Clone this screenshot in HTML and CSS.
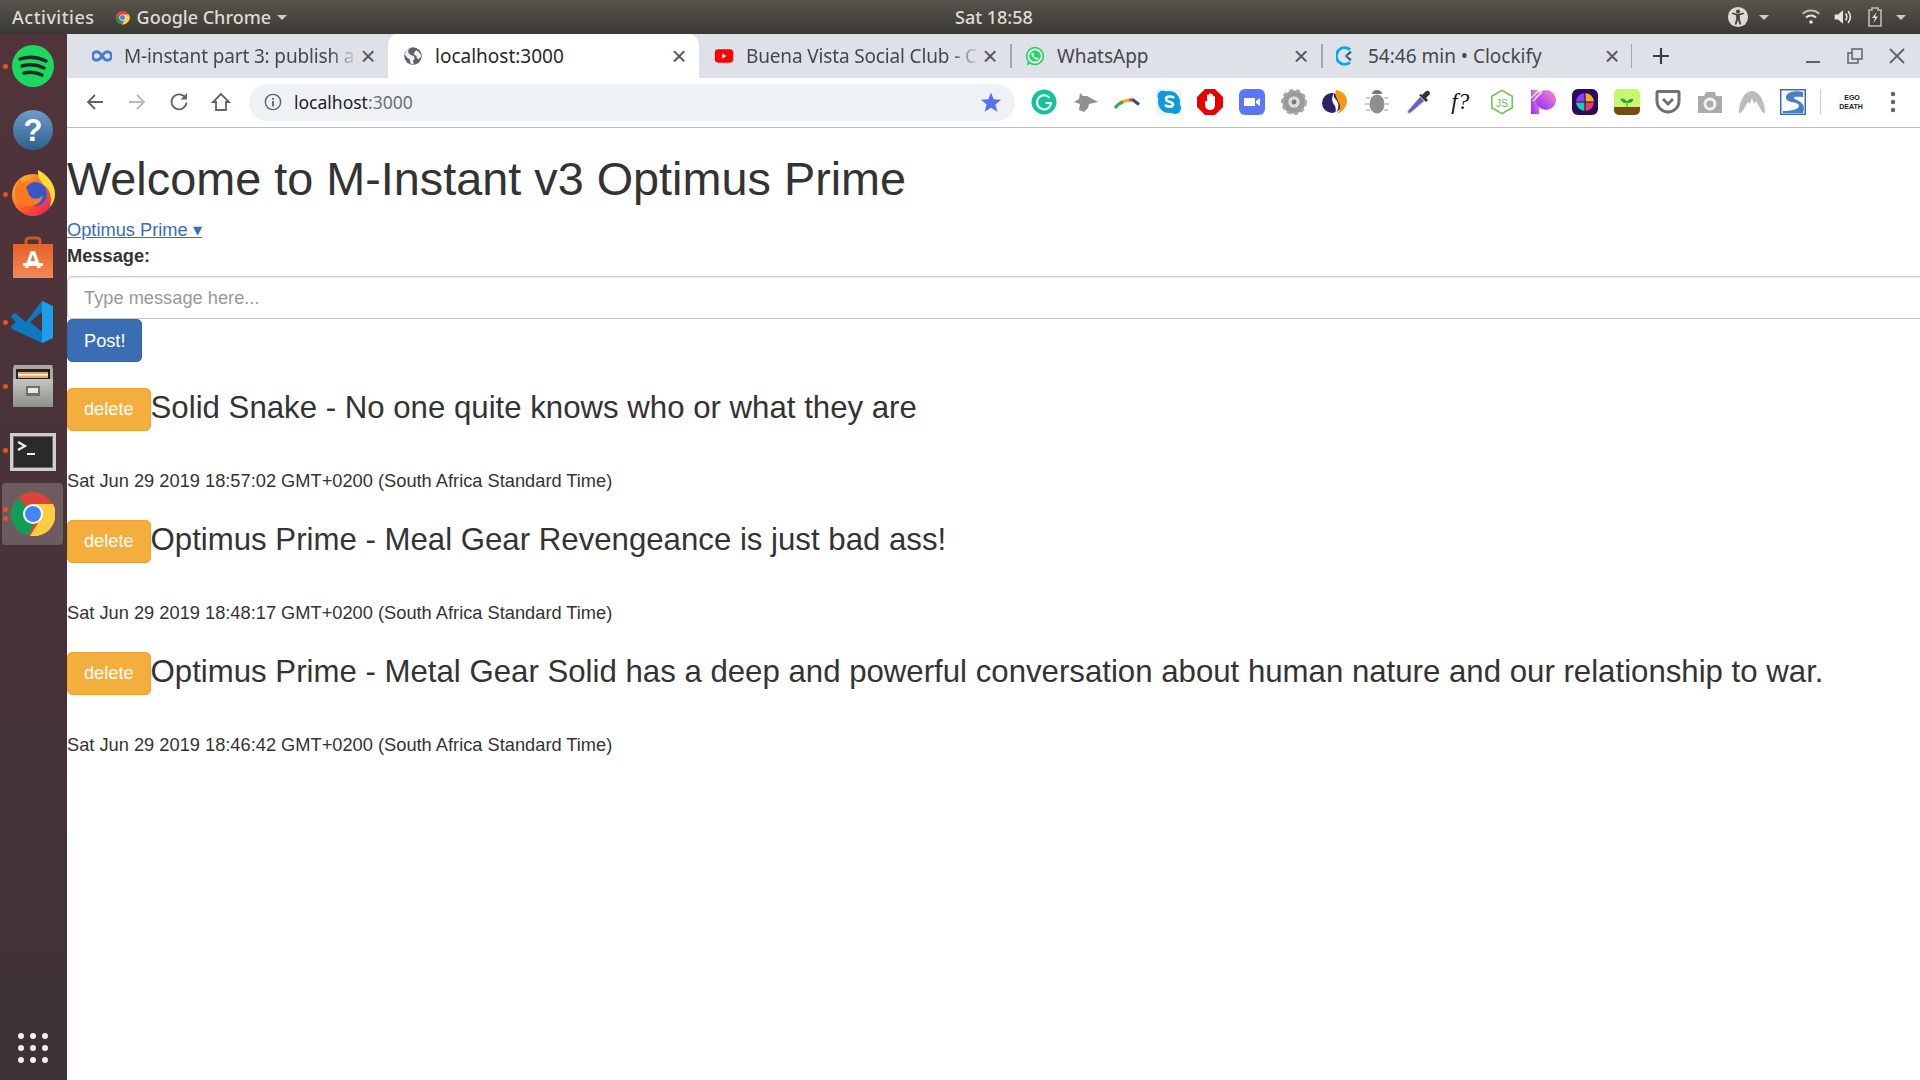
FILE: index.html
```html
<!DOCTYPE html>
<html lang="en">
<head>
<meta charset="utf-8">
<title>localhost:3000</title>
<link rel="stylesheet" href="styles.css">
</head>
<body>
<header class="topbar">
  <div class="top-left">
    <span class="top-label activities">Activities</span>
    <span class="app-menu">
      <svg class="app-icon" viewBox="0 0 24 24"><circle cx="12" cy="12" r="11" fill="#db4437"/><path d="M12 12 1 12A11 11 0 0 0 9 22.600L14 14Z" fill="#0f9d58"/><path d="M12 7H22.300A11 11 0 0 1 11 23L16.500 14Z" fill="#ffcd40"/><circle cx="12" cy="12" r="5" fill="#fff"/><circle cx="12" cy="12" r="4" fill="#4285f4"/></svg>
      <span class="top-label">Google Chrome</span>
      <i class="caret"></i>
    </span>
  </div>
  <span class="top-label clock">Sat 18:58</span>
  <div class="top-right">
    <svg class="tray-a11y" viewBox="0 0 24 24"><circle cx="12" cy="12" r="11" fill="#dddad3"/><circle cx="12" cy="6" r="2.200" fill="#45433e"/><path d="M5.500 8.800 10 10v4l-1.600 6.200h2L12 15l1.600 5.200h2L14 14v-4l4.500-1.200-.4-1.600L12 8.600 5.900 7.200Z" fill="#45433e"/></svg>
    <i class="caret caret-a11y"></i>
    <svg class="tray-wifi" viewBox="0 0 24 24" fill="none" stroke="#e6e4de" stroke-width="2.400"><path d="M2 8a15 15 0 0 1 20 0" opacity=".75"/><path d="M6 12.500a9 9 0 0 1 12 0"/><circle cx="12" cy="18" r="2.200" fill="#e6e4de" stroke="none"/></svg>
    <svg class="tray-vol" viewBox="0 0 24 24"><path d="M2 9h4l6-5v16l-6-5H2Z" fill="#e6e4de"/><path d="M15 8a6 6 0 0 1 0 8M18 5a10 10 0 0 1 0 14" fill="none" stroke="#e6e4de" stroke-width="2"/></svg>
    <svg class="tray-bat" viewBox="0 0 16 20"><path d="M5 1h6v2h3v16H2V3h3Z" fill="none" stroke="#bdbab3" stroke-width="1.600"/><path d="M9.500 5 5 11h3l-1.500 5L11 9.500H8Z" fill="#e6e4de"/></svg>
    <i class="caret caret-end"></i>
  </div>
</header>

<div class="desktop">
  <nav class="dock">
    <div class="dock-item running">
      <svg class="dock-icon" viewBox="0 0 44 44"><circle cx="22" cy="22" r="21" fill="#1ed760"/><path d="M9 15c9-3 18-2 26 2M11 22c7-2 15-1.500 22 2M13 29c6-1.500 12-1 18 2" fill="none" stroke="#1d2b22" stroke-width="3.400" stroke-linecap="round"/></svg>
    </div>
    <div class="dock-item">
      <svg class="dock-icon" viewBox="0 0 44 44"><defs><linearGradient id="helpg" x1="0" y1="0" x2="0" y2="1"><stop offset="0" stop-color="#6d9ccb"/><stop offset="1" stop-color="#2f5f8d"/></linearGradient></defs><circle cx="22" cy="22" r="20" fill="url(#helpg)"/><text x="22" y="33" text-anchor="middle" class="help-mark">?</text></svg>
    </div>
    <div class="dock-item running">
      <svg class="dock-icon dock-fox" viewBox="0 0 44 46"><defs><linearGradient id="foxg" x1="0" y1="0" x2="1" y2="1"><stop offset="0" stop-color="#ffcb2e"/><stop offset=".55" stop-color="#ff5b27"/><stop offset="1" stop-color="#e0126e"/></linearGradient></defs><circle cx="22" cy="25" r="21" fill="url(#foxg)"/><path d="M27 0c10 5 17 14 17 24 0 5-2 10-5 13 2-8 1-15-4-20-3-3-9-8-8-17Z" fill="#ffd93a"/><circle cx="24" cy="24" r="12" fill="#3a55c8"/><path d="M4 19 9 8l2 6c3-3 8-3 11-1-3 0-6 2-7 5 3 3 2 8 6 10 4 2 9 0 11-3-1 7-8 12-15 11-9-2-14-9-13-17Z" fill="#ff7a1f"/></svg>
    </div>
    <div class="dock-item">
      <svg class="dock-icon dock-store" viewBox="0 0 44 44"><defs><linearGradient id="storeg" x1="0" y1="0" x2="0" y2="1"><stop offset="0" stop-color="#e4612a"/><stop offset="1" stop-color="#f08a55"/></linearGradient></defs><path d="M15 10V6a3 3 0 0 1 3-3h8a3 3 0 0 1 3 3v4" fill="none" stroke="#c9582b" stroke-width="3"/><path d="M2 9h40v34H2Z" fill="url(#storeg)"/><text x="22" y="33" text-anchor="middle" class="store-mark">A</text><path d="M12 28h20v3H12Z" fill="#fff"/></svg>
    </div>
    <div class="dock-item running">
      <svg class="dock-icon" viewBox="0 0 44 44"><path d="M31 1 42 6v32l-11 5L1 29l-1-3 5-4-5-5 1-2 3-2 11 9Z" fill="#0f78bf"/><path d="M31 1 42 6v32l-11 5Z" fill="#1e9de8"/><path d="M31 12 19 22l12 10Z" fill="#4c3439"/></svg>
    </div>
    <div class="dock-item running">
      <svg class="dock-icon" viewBox="0 0 44 44"><defs><linearGradient id="fileg" x1="0" y1="0" x2="0" y2="1"><stop offset="0" stop-color="#c4c4c1"/><stop offset="1" stop-color="#8f8f8c"/></linearGradient></defs><path d="M3 1h38l1 4v38H2V5Z" fill="#a9a9a6"/><path d="M5 5h34v10H5Z" fill="#26231f"/><path d="M7 8h30v6H7Z" fill="#f6a15b"/><path d="M7 10h30v1.500H7Z" fill="#fff"/><path d="M2 15h40v28H2Z" fill="url(#fileg)"/><path d="M15 22h14v10H15Z" fill="#6f6f6c"/><path d="M17 24h10v5H17Z" fill="#e9e9e7"/></svg>
    </div>
    <div class="dock-item running">
      <svg class="dock-term" viewBox="0 0 46 38"><path d="M0 0h46v38H0Z" fill="#cfcfcc"/><path d="M3 3h40v32H3Z" fill="#6e6e6c"/><path d="M4 4h38v30H4Z" fill="#2a2a2a"/><path d="M8 9l7 4-7 4" fill="none" stroke="#eee" stroke-width="2.200"/><path d="M17 20h8v2h-8Z" fill="#eee"/></svg>
    </div>
    <div class="dock-item running double active">
      <svg class="dock-icon" viewBox="0 0 44 44"><circle cx="22" cy="22" r="22" fill="#db4437"/><path d="M0 22A22 22 0 0 0 17 43.400L25 28 8 6A22 22 0 0 0 0 22Z" fill="#0f9d58"/><path d="M22 12H42A22 22 0 0 1 19 44L30 26Z" fill="#ffcd40"/><circle cx="22" cy="22" r="10" fill="#fff"/><circle cx="22" cy="22" r="8" fill="#4285f4"/></svg>
    </div>
    <div class="dock-item dock-apps">
      <svg class="apps-grid" viewBox="0 0 30 30" fill="#f2f0ef"><circle cx="3" cy="3" r="3"/><circle cx="15" cy="3" r="3"/><circle cx="27" cy="3" r="3"/><circle cx="3" cy="15" r="3"/><circle cx="15" cy="15" r="3"/><circle cx="27" cy="15" r="3"/><circle cx="3" cy="27" r="3"/><circle cx="15" cy="27" r="3"/><circle cx="27" cy="27" r="3"/></svg>
    </div>
  </nav>

  <div class="browser">
    <div class="tabstrip">
      <div class="tab">
        <svg class="favicon" viewBox="0 0 24 24" fill="none" stroke="#4a7ccb" stroke-width="3.600"><path d="M12 12C9.500 8 7.500 7 5.500 7a5 5 0 0 0 0 10c2 0 4-1 6.500-5s4.500-5 6.500-5a5 5 0 0 1 0 10c-2 0-4-1-6.500-5Z"/></svg>
        <span class="tab-title fade">M-instant part 3: publish a</span>
        <span class="tab-close">×</span>
      </div>
      <div class="tab tab-active">
        <svg class="favicon" viewBox="0 0 24 24"><circle cx="12" cy="12" r="10.500" fill="#5f6368"/><path d="M9 2 6 5l1 4 3 2 3 1 1 3-2 3 1 4-4-1-1-5-3-2-3-4 3-6ZM16 5l4 3 2 4-3 4-2-1-1-3-3-2 1-3Z" fill="#fff" opacity=".9"/></svg>
        <span class="tab-title">localhost:3000</span>
        <span class="tab-close">×</span>
      </div>
      <div class="tab">
        <svg class="favicon" viewBox="0 0 24 24"><rect x="1" y="4" width="22" height="16" rx="4" fill="#f00"/><path d="M10 9v6l5-3Z" fill="#fff"/></svg>
        <span class="tab-title fade">Buena Vista Social Club - C</span>
        <span class="tab-close">×</span>
      </div>
      <div class="tab tab-sep">
        <svg class="favicon" viewBox="0 0 24 24"><circle cx="12" cy="12" r="11" fill="#25d366"/><path d="M2 23l2-6 4 4Z" fill="#25d366"/><circle cx="12" cy="12" r="8" fill="#25d366" stroke="#fff" stroke-width="2"/><path d="M8.500 7.500c-1.500 1.500-1 4 1.500 6.500s5 3 6.500 1.500l-2-2-1.500 1c-1-.5-2.500-2-3-3l1-1.500Z" fill="#fff"/></svg>
        <span class="tab-title">WhatsApp</span>
        <span class="tab-close">×</span>
      </div>
      <div class="tab tab-sep tab-sep-end">
        <svg class="favicon" viewBox="0 0 24 24" fill="none"><path d="M17 4.500A10 10 0 1 0 17 19.500" stroke="#03a9f4" stroke-width="3.400"/><path d="M18 7l-5 4M18 17l-5-4" stroke="#37474f" stroke-width="2.200"/><circle cx="12" cy="12" r="1.600" fill="#03a9f4"/></svg>
        <span class="tab-title">54:46 min • Clockify</span>
        <span class="tab-close">×</span>
      </div>
      <svg class="new-tab" viewBox="0 0 18 18"><path d="M9 1v16M1 9h16" stroke="#3c4043" stroke-width="2.200"/></svg>
      <div class="window-controls">
        <svg class="win-btn" viewBox="0 0 18 18"><path d="M2 15h14" stroke="#5f6368" stroke-width="2"/></svg>
        <svg class="win-btn" viewBox="0 0 18 18" fill="none" stroke="#5f6368" stroke-width="1.500"><path d="M6 2h10v10H6Z"/><path d="M6 6H2v10h10v-4"/></svg>
        <svg class="win-btn" viewBox="0 0 18 18"><path d="M2 2l14 14M16 2 2 16" stroke="#5f6368" stroke-width="1.800"/></svg>
      </div>
    </div>

    <div class="toolbar">
      <svg class="nav-btn" viewBox="0 0 20 20" fill="none" stroke="#5f6368" stroke-width="1.800"><path d="M18 10H3M10 3l-7 7 7 7"/></svg>
      <svg class="nav-btn" viewBox="0 0 20 20" fill="none" stroke="#b6b9bd" stroke-width="1.800"><path d="M2 10h15M10 3l7 7-7 7"/></svg>
      <svg class="nav-btn" viewBox="0 0 20 20" fill="none" stroke="#5f6368" stroke-width="1.800"><path d="M16.500 6A7.500 7.500 0 1 0 17.500 10.500"/><path d="M18 1v6.500h-6.500Z" fill="#5f6368" stroke="none"/></svg>
      <svg class="nav-btn" viewBox="0 0 20 20" fill="none" stroke="#5f6368" stroke-width="1.800"><path d="M10 2 2 10h3v8h10v-8h3Z"/></svg>
      <div class="omnibox">
        <svg class="info-icon" viewBox="0 0 20 20"><circle cx="10" cy="10" r="8.500" fill="none" stroke="#5f6368" stroke-width="1.600"/><path d="M9 9h2v6H9ZM9 5.500h2v2H9Z" fill="#5f6368"/></svg>
        <span class="url"><span class="url-host">localhost</span>:3000</span>
        <svg class="star" viewBox="0 0 24 24"><path d="M12 1.500 15 9l8 .5-6.200 5.200L19 22.500l-7-4.300-7 4.300 2.200-7.800L1 9.500 9 9Z" fill="#5a6ff0"/></svg>
      </div>
      <div class="extensions">
        <span class="ext"><svg viewBox="0 0 26 26"><circle cx="13" cy="13" r="12.500" fill="#15c39a"/><path d="M18.500 9A7 7 0 1 0 20 14h-5.500" fill="none" stroke="#fff" stroke-width="2"/></svg></span>
        <span class="ext"><svg viewBox="0 0 26 26"><path d="M2 13 7 10 8 4l3 3h4l11 6-9 2-1 4-4 4-5-2 1-6Z" fill="#8f8f8f"/></svg></span>
        <span class="ext"><svg viewBox="0 0 26 26" fill="none" stroke-width="3.200"><path d="M1 19C3 16 6 14 9.500 12.500" stroke="#3ba55c"/><path d="M9 12.800C11 11.800 13 11.300 15 11" stroke="#f2b01e"/><path d="M15 11.200C16.500 10.800 18 10.800 19 11" stroke="#e8432e"/><path d="M18.500 10.500 25 15.500" stroke="#2c4f86"/></svg></span>
        <span class="ext"><svg viewBox="0 0 26 26"><rect width="26" height="26" fill="#eef2f4"/><circle cx="13" cy="13" r="11" fill="#0d9bdc"/><circle cx="7" cy="7" r="5.500" fill="#0d9bdc"/><circle cx="19" cy="19" r="6" fill="#0d9bdc"/><path d="M18 9c-1.500-2-8-2.500-8 1 0 3.500 7 2 7 5.500 0 3-6 2.500-8 .5" fill="none" stroke="#fff" stroke-width="2.600"/></svg></span>
        <span class="ext"><svg viewBox="0 0 26 26"><path d="M8 0h10l8 8v10l-8 8H8l-8-8V8Z" fill="#e60000"/><path d="M8 12l2 0V6.500a1 1 0 0 1 2 0V5a1 1 0 0 1 2 0v1a1 1 0 0 1 2 0v2a1 1 0 0 1 2 0v8c0 3-2 5-5 5s-4-2-5-4Z" fill="#fff"/></svg></span>
        <span class="ext"><svg viewBox="0 0 26 26"><rect width="26" height="26" rx="6" fill="#5b76f7"/><path d="M5 9h11v8H5ZM17 12l4-3v8l-4-3Z" fill="#fff"/></svg></span>
        <span class="ext"><svg viewBox="0 0 26 26"><circle cx="13" cy="13" r="8.500" fill="none" stroke="#9a9a9a" stroke-width="6"/><circle cx="13" cy="13" r="11.500" fill="none" stroke="#a8a8a8" stroke-width="3" stroke-dasharray="4 3"/><circle cx="13" cy="13" r="5" fill="#d8d8d8"/><circle cx="13" cy="13" r="2.400" fill="#777"/></svg></span>
        <span class="ext"><svg viewBox="0 0 26 26"><circle cx="10" cy="14" r="10" fill="#2b2462"/><path d="M14 1c7 1 11 6 11 11s-4 11-10 13c3-3 4-7 2-11-2-5-5-8-3-13Z" fill="#f79a12"/><path d="M12 4C9 9 10 13 13 17c1 2 1 5 0 8 3-4 5-8 2-13-2-3-4-4-3-8Z" fill="#fff"/></svg></span>
        <span class="ext"><svg viewBox="0 0 26 26"><path d="M8 5a5 4 0 0 1 10 0Z" fill="#777"/><ellipse cx="13" cy="15" rx="7.500" ry="9.500" fill="#8f8f8f"/><path d="M2 9h4M20 9h4M1 15h4M21 15h4M2 21h4M20 21h4" stroke="#bdbdbd" stroke-width="1.600"/></svg></span>
        <span class="ext"><svg viewBox="0 0 26 26"><path d="M4 24 2 24l0-2L14 8l4 4Z" fill="#6a5acd" stroke="#aaa" stroke-width="1"/><path d="M13 6l7 7 2-2-2-2 4-4a2.800 2.800 0 0 0-4-3l-4 4-1-1Z" fill="#333"/></svg></span>
        <span class="ext ext-f">f?</span>
        <span class="ext"><svg viewBox="0 0 26 28"><path d="M13 1.500 24 7.800v12.400L13 26.500 2 20.200V7.800Z" fill="#fff" stroke="#6cc24a" stroke-width="1.600"/><text x="13" y="19" text-anchor="middle" class="js-mark">JS</text></svg></span>
        <span class="ext"><svg viewBox="0 0 26 26"><defs><linearGradient id="patg" x1="0" y1="1" x2="1" y2="0"><stop offset="0" stop-color="#8b2cf5"/><stop offset="1" stop-color="#ff8bd0"/></linearGradient></defs><path d="M0 1h8v24H0Z" fill="url(#patg)"/><circle cx="15" cy="11" r="10" fill="url(#patg)"/><path d="M0 9 8 1M2 12 11 3" stroke="#fff" stroke-width="1.200"/></svg></span>
        <span class="ext"><svg viewBox="0 0 26 26"><rect width="26" height="26" rx="6" fill="#2d0a5e"/><path d="M13 4a9 9 0 0 0-9 9h9Z" fill="#8a3ff0"/><path d="M13 4a9 9 0 0 1 9 9h-9Z" fill="#f7a81b"/><path d="M4 13a9 9 0 0 0 9 9v-9Z" fill="#1fc8a9"/><path d="M22 13a9 9 0 0 1-9 9v-9Z" fill="#f0386b"/><path d="M13 4v18M4 13h18" stroke="#2d0a5e" stroke-width="1.200"/></svg></span>
        <span class="ext"><svg viewBox="0 0 26 26"><rect width="26" height="26" rx="5" fill="#c8f66f"/><path d="M0 18h26v3a5 5 0 0 1-5 5H5a5 5 0 0 1-5-5Z" fill="#7a4a14"/><path d="M13 18v-6M13 13c-2-3-4-3-6-3 1 3 3 4 6 3ZM13 13c2-2.500 4-3 6-2.500-1 2.500-3 3.500-6 2.500Z" stroke="#2f9e3a" fill="#2f9e3a"/></svg></span>
        <span class="ext"><svg viewBox="0 0 26 26" fill="none" stroke="#707070" stroke-width="3"><path d="M3 2.500h20a1 1 0 0 1 1 1V12a11 11 0 0 1-22 0V3.500a1 1 0 0 1 1-1Z"/><path d="M8 10l5 5 5-5"/></svg></span>
        <span class="ext"><svg viewBox="0 0 26 26"><path d="M1 7h6l2-4h9l1 4h6v17H1Z" fill="#aaa"/><circle cx="13" cy="15" r="6.500" fill="#f1f1f1"/><circle cx="13" cy="15" r="3.500" fill="#aaa"/></svg></span>
        <span class="ext"><svg viewBox="0 0 26 26"><path d="M0 24C0 12 6 2 13 2s13 10 13 22c-2 0-3-1-5-5l-4-7-2 3-2-6-2 6-2-2-3 5c-2 4-4 6-6 6Z" fill="#bcbcbc"/></svg></span>
        <span class="ext"><svg viewBox="0 0 26 26"><rect x=".75" y=".75" width="24.500" height="24.500" fill="#fff" stroke="#3a6fb5" stroke-width="1.500"/><path d="M23 3C14 1 5 4 6 9c1 6 13 3 13 8 0 3-8 5-16 5v2h20c2-5 1-9-4-12C12 9 11 7 23 8Z" fill="#4a7fc0"/></svg></span>
        <i class="ext-sep"></i>
        <span class="ext ext-avatar"><svg viewBox="0 0 26 26"><circle cx="13" cy="13" r="13" fill="#fafafa"/><text x="14" y="11" text-anchor="middle" class="ego-mark">EGO</text><text x="13" y="20" text-anchor="middle" class="ego-mark">DEATH</text></svg></span>
        <span class="ext ext-menu"><svg viewBox="0 0 6 22" fill="#5f6368"><circle cx="3" cy="3" r="2.200"/><circle cx="3" cy="11" r="2.200"/><circle cx="3" cy="19" r="2.200"/></svg></span>
      </div>
    </div>

    <main class="page">
      <h1 class="page-title">Welcome to M-Instant v3 Optimus Prime</h1>
      <a class="user-link" href="#">Optimus Prime ▾</a>
      <label class="field-label" for="msg">Message:</label>
      <input class="field" id="msg" type="text" placeholder="Type message here...">
      <button class="btn btn-post" type="button">Post!</button>

      <article class="post">
        <h3 class="post-title"><button class="btn btn-delete" type="button">delete</button><span class="post-text">Solid Snake - No one quite knows who or what they are</span></h3>
        <p class="post-date">Sat Jun 29 2019 18:57:02 GMT+0200 (South Africa Standard Time)</p>
      </article>
      <article class="post">
        <h3 class="post-title"><button class="btn btn-delete" type="button">delete</button><span class="post-text">Optimus Prime - Meal Gear Revengeance is just bad ass!</span></h3>
        <p class="post-date">Sat Jun 29 2019 18:48:17 GMT+0200 (South Africa Standard Time)</p>
      </article>
      <article class="post">
        <h3 class="post-title"><button class="btn btn-delete" type="button">delete</button><span class="post-text">Optimus Prime - Metal Gear Solid has a deep and powerful conversation about human nature and our relationship to war.</span></h3>
        <p class="post-date">Sat Jun 29 2019 18:46:42 GMT+0200 (South Africa Standard Time)</p>
      </article>
    </main>
  </div>
</div>
</body>
</html>
```

FILE: styles.css
```css
* { box-sizing: border-box; }
html, body { height: 100%; margin: 0; overflow: hidden; }
body { display: flex; flex-direction: column; font-family: "Liberation Sans", Arial, sans-serif; color: #333; background: #fff; }

/* top bar */
.topbar { height: 34px; flex: none; display: grid; grid-template-columns: 955px auto 1fr; align-items: center; background: linear-gradient(#57544c, #3a3934); color: #dfdbd2; }
.top-left { display: flex; align-items: center; padding-left: 12px; }
.top-label { font-family: "Noto Sans", sans-serif; font-size: 18px; font-weight: 500; white-space: nowrap; }
.activities { letter-spacing: .5px; }
.clock { color: #dfdbd2; }
.app-menu { display: flex; align-items: center; margin-left: 20px; }
.app-icon { width: 15px; height: 15px; margin-right: 7px; }
.caret { width: 0; height: 0; border-left: 5px solid transparent; border-right: 5px solid transparent; border-top: 5px solid #cfccc5; margin-left: 6px; }
.top-right { display: flex; align-items: center; justify-content: flex-end; padding-right: 14px; }
.tray-a11y { width: 22px; height: 22px; }
.caret-a11y { margin-left: 10px; }
.tray-wifi { width: 20px; height: 20px; margin-left: 32px; }
.tray-vol { width: 20px; height: 20px; margin-left: 12px; }
.tray-bat { width: 16px; height: 20px; margin-left: 14px; }
.caret-end { margin-left: 13px; }

/* layout */
.desktop { flex: 1; min-height: 0; display: flex; }

/* dock */
.dock { width: 67px; flex: none; display: flex; flex-direction: column; background: linear-gradient(#50343a, #3e3236); }
.dock-item { height: 64px; flex: none; display: flex; align-items: center; justify-content: center; padding-right: 1px; position: relative; }
.dock-icon { width: 44px; height: 44px; }
.dock-fox { height: 46px; margin-top: -2px; }
.dock-store { margin-top: -2px; }
.dock-term { width: 46px; height: 38px; margin-top: 4px; }
.running::before { content: ""; position: absolute; left: 3px; top: 50%; width: 5px; height: 5px; margin-top: -2px; border-radius: 50%; background: #e95420; }
.double::before { margin-top: -7px; box-shadow: 0 9px 0 #e95420; z-index: 2; }
.active::after { content: ""; position: absolute; inset: 1px 4px 1px 2px; border-radius: 4px; background: rgba(255,255,255,.2); z-index: 0; }
.active .dock-icon { position: relative; z-index: 1; }
.dock-apps { margin-top: auto; }
.apps-grid { width: 30px; height: 30px; }
.help-mark { font-family: "Liberation Sans", sans-serif; font-size: 31px; font-weight: 700; fill: #fff; }
.store-mark { font-family: "Liberation Sans", sans-serif; font-size: 24px; font-weight: 700; fill: #fff; }

/* browser */
.browser { flex: 1; min-width: 0; display: flex; flex-direction: column; }
.tabstrip { height: 44px; flex: none; display: flex; align-items: stretch; padding-left: 10px; background: #dee1e8; }
.tab { width: 311px; flex: none; display: flex; align-items: center; padding: 0 10px 0 15px; position: relative; color: #45484c; font-family: "Noto Sans", sans-serif; font-size: 19px; }
.tab-active { background: #fff; border-radius: 10px 10px 0 0; color: #26282b; }
.tab-sep::before { content: ""; position: absolute; left: 0; top: 10px; bottom: 10px; width: 1.500px; background: #a4a7ab; }
.tab-sep-end::after { content: ""; position: absolute; right: 0; top: 10px; bottom: 10px; width: 1.500px; background: #a4a7ab; }
.favicon { width: 20px; height: 20px; flex: none; margin-right: 12px; }
.tab-title { flex: 1; min-width: 0; overflow: hidden; white-space: nowrap; }
.fade { letter-spacing: -.15px; mask-image: linear-gradient(to right, #000 88%, transparent 100%); -webkit-mask-image: linear-gradient(to right, #000 88%, transparent 100%); }
.tab-close { flex: none; width: 20px; text-align: center; font-family: "Liberation Sans", sans-serif; font-size: 26px; line-height: 1; color: #55585c; }
.new-tab { width: 18px; height: 18px; flex: none; align-self: center; margin-left: 20px; }
.window-controls { margin-left: auto; display: flex; align-items: center; padding-right: 14px; gap: 24px; }
.win-btn { width: 18px; height: 18px; }

.toolbar { height: 50px; flex: none; display: flex; align-items: center; padding: 0 0 1px 18px; border-bottom: 1.500px solid #bdbdbd; background: #fff; }
.nav-btn { width: 20px; height: 20px; flex: none; margin-right: 22px; }
.omnibox { width: 766px; height: 37px; flex: none; margin-left: -4px; display: flex; align-items: center; padding: 0 13px 0 15px; border-radius: 19px; background: #eff2f4; }
.info-icon { width: 18px; height: 18px; margin-right: 12px; flex: none; }
.url { font-family: "Noto Sans", sans-serif; font-size: 17.500px; color: #6b6f73; }
.url-host { color: #202124; }
.star { width: 22px; height: 22px; margin-left: auto; flex: none; }
.extensions { display: flex; align-items: center; margin-left: 8px; }
.ext { width: 41.650px; height: 26px; flex: none; display: flex; align-items: center; justify-content: center; }
.ext svg { width: 26px; height: 26px; }
.ext-f { font-family: "Liberation Serif", serif; font-style: italic; font-size: 23px; color: #111; }
.ext-sep { width: 1px; height: 26px; background: #cfd0d1; margin: 0 9px 0 6px; flex: none; }
.ext-menu svg { width: 6px; height: 22px; }
.js-mark { font-family: "Liberation Sans", sans-serif; font-size: 11px; fill: #6cc24a; }
.ego-mark { font-family: "Liberation Sans", sans-serif; font-size: 7px; font-weight: 700; fill: #222; }

/* page */
.page { flex: 1; min-height: 0; overflow: hidden; font-size: 18.250px; line-height: 26px; }
.page-title { margin: 26px 0 11px; font-size: 46.800px; line-height: 51.500px; font-weight: 500; }
.user-link { display: block; color: #3a6db8; text-decoration: underline; }
.field-label { display: block; margin-bottom: 7.500px; font-weight: 700; }
.field { display: block; width: calc(100% + 10px); height: 43px; padding: 0 16px; border: 1.500px solid #ccc; border-radius: 5px; font: inherit; color: #555; background: #fff; box-shadow: inset 0 1px 1px rgba(0,0,0,.08); }
.field::placeholder { color: #999; }
.btn { display: block; flex: none; height: 43px; padding: 0 16px; border: 1px solid transparent; border-radius: 5px; font-family: inherit; font-size: 18.200px; line-height: 26px; font-weight: 400; color: #fff; }
.btn-post { background: #3b6db5; border-color: #3664a8; }
.btn-delete { padding-bottom: 2px; background: #f4ae3d; border-color: #eea236; }
.post-title { display: flex; align-items: center; margin: 26px 0 37px; font-size: 31.200px; line-height: 34px; font-weight: 500; }
.post-text { padding-bottom: 3px; white-space: nowrap; }
.post-date { margin: 0; }
```
